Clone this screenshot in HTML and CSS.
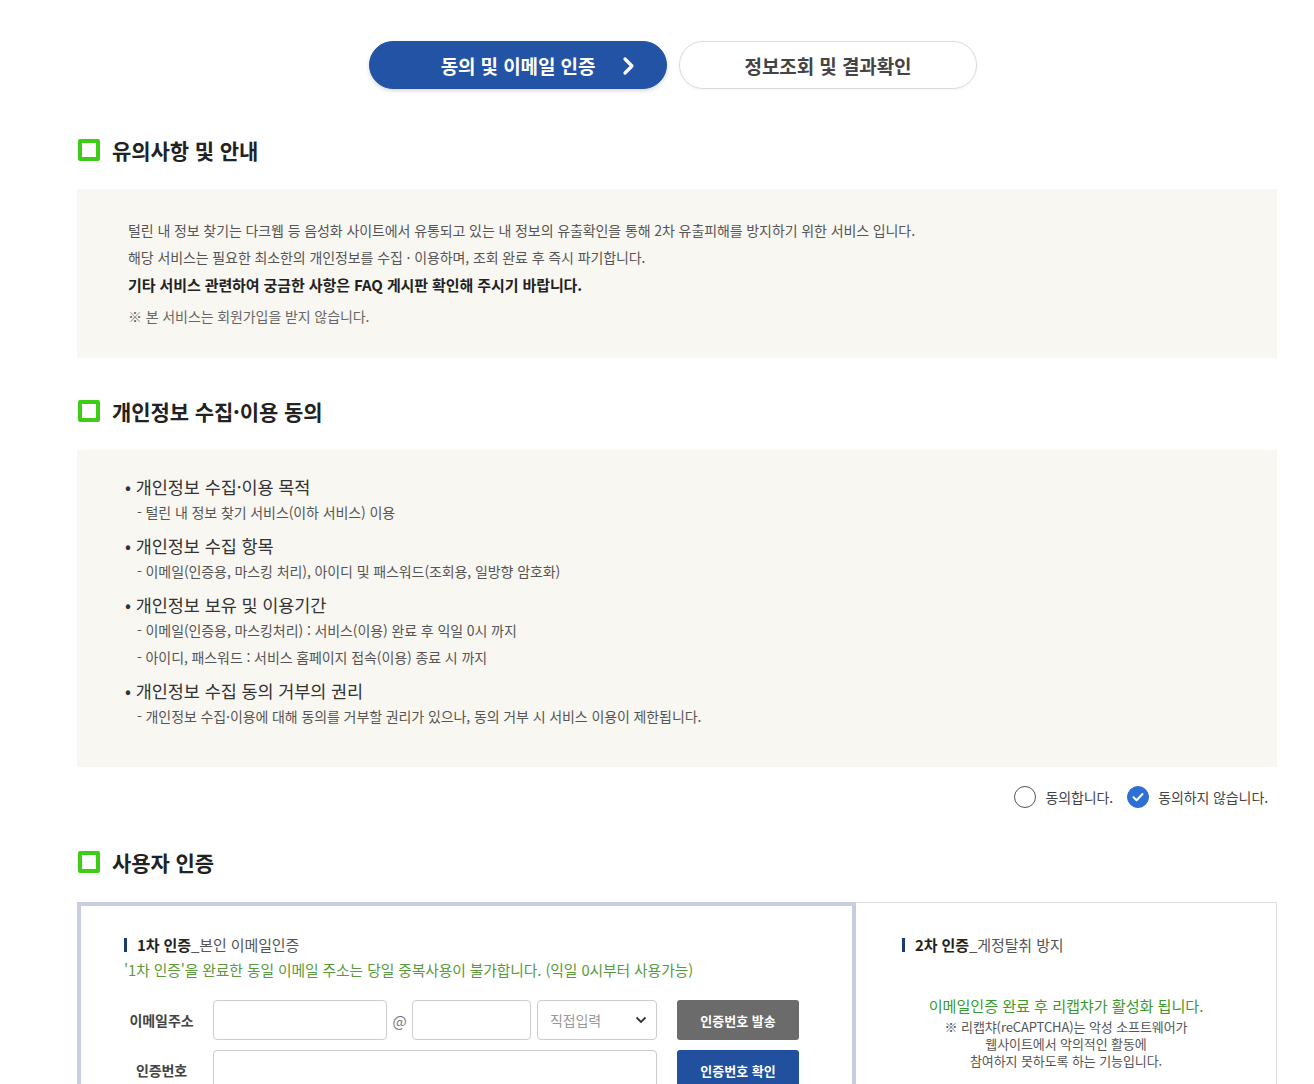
FILE: index.html
```html
<!DOCTYPE html>
<html lang="ko">

<head>
    <meta charset="UTF-8">
    <meta name="viewport" content="width=device-width, initial-scale=1.0">
    <title>털린 내 정보 찾기</title>
    <link rel="stylesheet" href="styles.css">
</head>

<body>

    <div class="page">

        <div class="steps">
            <a class="step active" href="#">동의 및 이메일 인증
                <svg class="step-arrow" width="14" height="20" viewBox="0 0 14 20">
                    <path d="M3 3 L10 10 L3 17" fill="none" stroke="#fff" stroke-width="3.2" stroke-linecap="round" stroke-linejoin="round"/>
                </svg>
            </a>
            <a class="step" href="#">정보조회 및 결과확인</a>
        </div>

        <h2 class="sec-title"><span class="sq"></span>유의사항 및 안내</h2>
        <div class="notice-box">
            <p>털린 내 정보 찾기는 다크웹 등 음성화 사이트에서 유통되고 있는 내 정보의 유출확인을 통해 2차 유출피해를 방지하기 위한 서비스 입니다.</p>
            <p>해당 서비스는 필요한 최소한의 개인정보를 수집 · 이용하며, 조회 완료 후 즉시 파기합니다.</p>
            <p class="strong">기타 서비스 관련하여 궁금한 사항은 FAQ 게시판 확인해 주시기 바랍니다.</p>
            <p class="note">※ 본 서비스는 회원가입을 받지 않습니다.</p>
        </div>

        <h2 class="sec-title"><span class="sq"></span>개인정보 수집·이용 동의</h2>
        <div class="notice-box agree-box">
            <dl>
                <dt>개인정보 수집·이용 목적</dt>
                <dd>- 털린 내 정보 찾기 서비스(이하 서비스) 이용</dd>
            </dl>
            <dl>
                <dt>개인정보 수집 항목</dt>
                <dd>- 이메일(인증용, 마스킹 처리), 아이디 및 패스워드(조회용, 일방향 암호화)</dd>
            </dl>
            <dl>
                <dt>개인정보 보유 및 이용기간</dt>
                <dd>- 이메일(인증용, 마스킹처리) : 서비스(이용) 완료 후 익일 0시 까지</dd>
                <dd>- 아이디, 패스워드 : 서비스 홈페이지 접속(이용) 종료 시 까지</dd>
            </dl>
            <dl>
                <dt>개인정보 수집 동의 거부의 권리</dt>
                <dd>- 개인정보 수집·이용에 대해 동의를 거부할 권리가 있으나, 동의 거부 시 서비스 이용이 제한됩니다.</dd>
            </dl>
        </div>

        <div class="agree-row">
            <label class="radio"><span class="circle"></span>동의합니다.</label>
            <label class="radio checked"><span class="circle">
                <svg width="22" height="22" viewBox="0 0 22 22">
                    <path d="M6.5 11.2 L9.6 14.2 L15.5 8" fill="none" stroke="#fff" stroke-width="2" stroke-linecap="round" stroke-linejoin="round"/>
                </svg>
            </span>동의하지 않습니다.</label>
        </div>

        <h2 class="sec-title"><span class="sq"></span>사용자 인증</h2>
        <div class="auth">
            <div class="auth-col first">
                <h3 class="auth-title"><b>1차 인증</b>_본인 이메일인증</h3>
                <p class="auth-warn">'1차 인증'을 완료한 동일 이메일 주소는 당일 중복사용이 불가합니다. (익일 0시부터 사용가능)</p>
                <div class="form-row">
                    <span class="form-label">이메일주소</span>
                    <input class="field email-id" type="text">
                    <span class="at">@</span>
                    <input class="field email-domain" type="text">
                    <div class="select">직접입력
                        <svg width="12" height="8" viewBox="0 0 12 8">
                            <path d="M1.5 1.5 L6 6 L10.5 1.5" fill="none" stroke="#333" stroke-width="1.8"/>
                        </svg>
                    </div>
                    <button class="btn gray">인증번호 발송</button>
                </div>
                <div class="form-row">
                    <span class="form-label">인증번호</span>
                    <input class="field code" type="text">
                    <button class="btn blue">인증번호 확인</button>
                </div>
            </div>
            <div class="auth-col second">
                <h3 class="auth-title"><b>2차 인증</b>_게정탈취 방지</h3>
                <div class="captcha-info">
                    <p class="captcha-on">이메일인증 완료 후 리캡챠가 활성화 됩니다.</p>
                    <p>※ 리캡챠(reCAPTCHA)는 악성 소프트웨어가<br>웹사이트에서 악의적인 활동에<br>참여하지 못하도록 하는 기능입니다.</p>
                </div>
            </div>
        </div>

    </div>

</body>

</html>
```

FILE: styles.css
```css
body {
    margin: 0;
    background: #fff;
    font-family: "Noto Sans CJK KR", "Noto Sans", sans-serif;
    color: #333;
    letter-spacing: -0.1px;
}

.page {
    width: 1200px;
    margin-left: 77px;
    padding-top: 41px;
}

/* step tabs */
.steps {
    display: flex;
    justify-content: center;
    gap: 12px;
    padding-right: 8px;
}

.step {
    position: relative;
    width: 298px;
    height: 48px;
    box-sizing: border-box;
    border: 1px solid #dcdcdc;
    border-radius: 24px;
    background: #fff;
    color: #444;
    font-size: 19px;
    font-weight: bold;
    text-decoration: none;
    display: flex;
    align-items: center;
    justify-content: center;
    box-shadow: 0 1px 3px rgba(0, 0, 0, 0.05);
}

.step.active {
    background: #2253a4;
    border-color: #2253a4;
    color: #fff;
    box-shadow: 0 2px 4px rgba(0, 0, 0, 0.15);
}

.step-arrow {
    position: absolute;
    right: 30px;
    top: 14px;
}

/* section headings */
.sec-title {
    display: flex;
    align-items: center;
    gap: 12px;
    margin: 0;
    height: 22px;
    padding-left: 1px;
    font-size: 21px;
    font-weight: bold;
    color: #222;
}

.sec-title .sq {
    width: 22px;
    height: 22px;
    box-sizing: border-box;
    border: 4px solid #3fcc17;
    border-radius: 2px;
}

.steps + .sec-title {
    margin-top: 50px;
}

.notice-box {
    margin-top: 28px;
    background: #f9f7f2;
    padding: 28px 50px 28px 51px;
    font-size: 14px;
    color: #555;
}

.notice-box p {
    margin: 0;
    line-height: 27px;
}

.notice-box .strong {
    color: #222;
    font-size: 15px;
    font-weight: bold;
}

.notice-box .note {
    margin-top: 5px;
    color: #666;
}

.notice-box + .sec-title {
    margin-top: 42px;
}

/* consent list */
.agree-box {
    padding: 25px 50px 29px 48px;
}

.agree-box dl {
    margin: 0 0 8px;
}

.agree-box dt {
    font-size: 17.5px;
    line-height: 24px;
    color: #333;
}

.agree-box dt::before {
    content: "•";
    margin-right: 5px;
}

.agree-box dd {
    margin: 0 0 0 12px;
    font-size: 14px;
    line-height: 27px;
    color: #555;
}

.agree-row {
    display: flex;
    justify-content: flex-end;
    gap: 14px;
    padding: 19px 9px 0 0;
    margin-bottom: 43px;
}

.radio {
    display: flex;
    align-items: center;
    gap: 9px;
    font-size: 14px;
    color: #444;
    height: 22px;
}

.radio .circle {
    width: 22px;
    height: 22px;
    box-sizing: border-box;
    border: 1px solid #555;
    border-radius: 50%;
    display: flex;
}

.radio.checked .circle {
    background: #2e6fd4;
    border-color: #2e6fd4;
}

.radio.checked .circle svg {
    margin: -1px;
}

/* user auth */
.auth {
    display: flex;
    margin-top: 29px;
}

.auth-col {
    box-sizing: border-box;
    height: 200px;
}

.auth-col.first {
    width: 779px;
    border: 4px solid #c6cee0;
    border-bottom: none;
    padding: 32px 0 0 43px;
}

.auth-col.second {
    flex: 1;
    border: 1px solid #dcdcdc;
    border-left: none;
    border-bottom: none;
    padding: 35px 0 0 46px;
}

.auth-title {
    margin: 0;
    font-size: 15px;
    font-weight: normal;
    color: #555;
    line-height: 22px;
    border-left: 3px solid #1b3b6c;
    padding-left: 10px;
    height: 14px;
    display: flex;
    align-items: center;
}

.auth-title b {
    color: #222;
}

.auth-warn {
    margin: 8px 0 0;
    font-size: 14.8px;
    line-height: 20px;
    color: #5a9a3a;
}

.form-row {
    display: flex;
    align-items: center;
    height: 40px;
    margin-top: 10px;
}

.auth-warn + .form-row {
    margin-top: 20px;
}

.form-label {
    width: 89px;
    box-sizing: border-box;
    padding-right: 14px;
    text-align: center;
    font-size: 14px;
    font-weight: bold;
    color: #444;
}

.field {
    height: 40px;
    box-sizing: border-box;
    border: 1px solid #ccc;
    border-radius: 4px;
    background: #fff;
    margin: 0;
}

.email-id {
    width: 174px;
}

.at {
    width: 25px;
    text-align: center;
    font-size: 15px;
    color: #777;
}

.email-domain {
    width: 119px;
}

.select {
    margin-left: 6px;
    width: 120px;
    height: 40px;
    box-sizing: border-box;
    border: 1px solid #ccc;
    border-radius: 4px;
    padding: 0 9px 0 12px;
    display: flex;
    align-items: center;
    justify-content: space-between;
    font-size: 14px;
    color: #999;
}

.code {
    width: 444px;
}

.btn {
    margin-left: 20px;
    width: 122px;
    height: 40px;
    border: none;
    border-radius: 3px;
    color: #fff;
    font-family: inherit;
    font-size: 13px;
    font-weight: bold;
    letter-spacing: 0;
}

.btn.gray {
    background: #6b6b6b;
}

.btn.blue {
    background: #21509f;
}

.captcha-info {
    margin-top: 41px;
    padding-right: 46px;
    text-align: center;
    font-size: 13px;
    line-height: 17px;
    color: #555;
}

.captcha-info p {
    margin: 0;
}

.captcha-info .captcha-on {
    font-size: 15.2px;
    line-height: 24px;
    color: #3b9a2b;
    margin-bottom: 1px;
}
```
